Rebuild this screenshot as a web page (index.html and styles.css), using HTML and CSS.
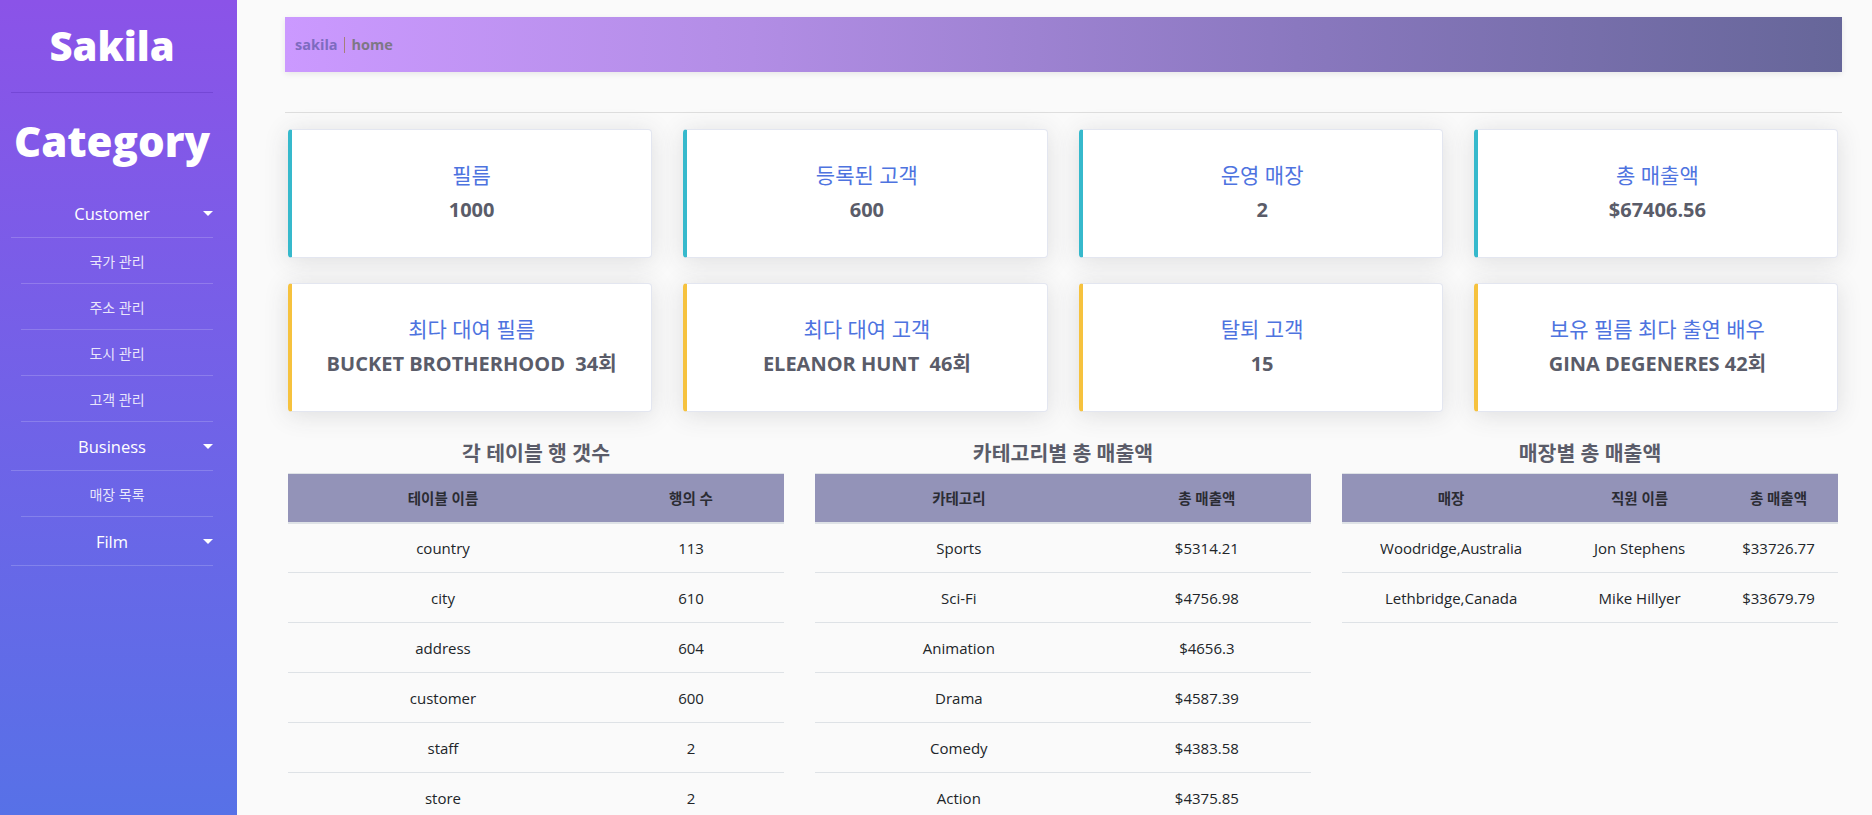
FILE: index.html
```html
<!DOCTYPE html>
<html lang="ko">
<head>
<meta charset="utf-8">
<title>Sakila</title>
<link rel="stylesheet" href="styles.css">
</head>
<body>
<aside class="sidebar">
  <div class="brand">Sakila</div>
  <div class="cat-title">Category</div>
  <nav class="menu">
    <div class="menu-group">Customer<span class="caret"></span></div>
    <a class="menu-sub">국가 관리</a>
    <a class="menu-sub">주소 관리</a>
    <a class="menu-sub">도시 관리</a>
    <a class="menu-sub">고객 관리</a>
    <div class="menu-group">Business<span class="caret"></span></div>
    <a class="menu-sub">매장 목록</a>
    <div class="menu-group">Film<span class="caret"></span></div>
  </nav>
</aside>
<main class="main">
  <div class="topbar">
    <span class="crumb-root">sakila</span><span class="crumb-sep"></span><span class="crumb-cur">home</span>
  </div>
  <hr class="divider">
  <section class="cards">
    <div class="card info"><div class="card-title">필름</div><div class="card-value">1000</div></div>
    <div class="card info"><div class="card-title">등록된 고객</div><div class="card-value">600</div></div>
    <div class="card info"><div class="card-title">운영 매장</div><div class="card-value">2</div></div>
    <div class="card info"><div class="card-title">총 매출액</div><div class="card-value">$67406.56</div></div>
    <div class="card warn"><div class="card-title">최다 대여 필름</div><div class="card-value">BUCKET BROTHERHOOD&nbsp; 34회</div></div>
    <div class="card warn"><div class="card-title">최다 대여 고객</div><div class="card-value">ELEANOR HUNT&nbsp; 46회</div></div>
    <div class="card warn"><div class="card-title">탈퇴 고객</div><div class="card-value">15</div></div>
    <div class="card warn"><div class="card-title">보유 필름 최다 출연 배우</div><div class="card-value">GINA DEGENERES 42회</div></div>
  </section>
  <section class="tables">
    <div class="tblock">
      <h3 class="ttitle">각 테이블 행 갯수</h3>
      <table class="dtable t1">
        <thead><tr><th>테이블 이름</th><th>행의 수</th></tr></thead>
        <tbody>
          <tr><td>country</td><td>113</td></tr>
          <tr><td>city</td><td>610</td></tr>
          <tr><td>address</td><td>604</td></tr>
          <tr><td>customer</td><td>600</td></tr>
          <tr><td>staff</td><td>2</td></tr>
          <tr><td>store</td><td>2</td></tr>
          <tr><td>film</td><td>1000</td></tr>
          <tr><td>actor</td><td>200</td></tr>
          <tr><td>category</td><td>16</td></tr>
        </tbody>
      </table>
    </div>
    <div class="tblock">
      <h3 class="ttitle">카테고리별 총 매출액</h3>
      <table class="dtable t2">
        <thead><tr><th>카테고리</th><th>총 매출액</th></tr></thead>
        <tbody>
          <tr><td>Sports</td><td>$5314.21</td></tr>
          <tr><td>Sci-Fi</td><td>$4756.98</td></tr>
          <tr><td>Animation</td><td>$4656.3</td></tr>
          <tr><td>Drama</td><td>$4587.39</td></tr>
          <tr><td>Comedy</td><td>$4383.58</td></tr>
          <tr><td>Action</td><td>$4375.85</td></tr>
          <tr><td>New</td><td>$4351.62</td></tr>
          <tr><td>Games</td><td>$4281.33</td></tr>
          <tr><td>Foreign</td><td>$4270.67</td></tr>
        </tbody>
      </table>
    </div>
    <div class="tblock">
      <h3 class="ttitle">매장별 총 매출액</h3>
      <table class="dtable t3">
        <thead><tr><th>매장</th><th>직원 이름</th><th>총 매출액</th></tr></thead>
        <tbody>
          <tr><td>Woodridge,Australia</td><td>Jon Stephens</td><td>$33726.77</td></tr>
          <tr><td>Lethbridge,Canada</td><td>Mike Hillyer</td><td>$33679.79</td></tr>
        </tbody>
      </table>
    </div>
  </section>
</main>
</body>
</html>
```
FILE: styles.css
```css
* { box-sizing: border-box; }
html, body { margin: 0; padding: 0; }
body {
  display: flex;
  align-items: flex-start;
  background: #fafafa;
  font-family: "Open Sans", "Noto Sans CJK KR", sans-serif;
  color: #212529;
}

/* Sidebar */
.sidebar {
  position: sticky;
  top: 0;
  flex: 0 0 237px;
  width: 237px;
  height: 100vh;
  background: linear-gradient(180deg, #8b53e8 0%, #5771e7 100%);
  color: #fff;
}
.brand {
  margin: 0 24px 0 11px;
  height: 93px;
  display: flex;
  align-items: center;
  justify-content: center;
  font-size: 40px;
  font-weight: 800;
  border-bottom: 1px solid rgba(60, 20, 150, 0.22);
  padding-bottom: 2px;
}
.cat-title {
  margin: 0 24px 0 11px;
  height: 96px;
  display: flex;
  align-items: center;
  justify-content: center;
  font-size: 42px;
  font-weight: 800;
  padding-bottom: 2px;
}
.menu {
  margin: 0 24px 0 11px;
  display: flex;
  flex-direction: column;
}
.menu-group {
  position: relative;
  height: 49px;
  display: flex;
  align-items: center;
  justify-content: center;
  font-size: 16.5px;
  color: #fff;
  border-bottom: 1px solid rgba(255, 255, 255, 0.18);
}
.caret {
  position: absolute;
  right: 0;
  top: 22px;
  width: 0;
  height: 0;
  border-left: 5px solid transparent;
  border-right: 5px solid transparent;
  border-top: 5px solid #fff;
}
.menu-sub {
  margin-left: 10px;
  height: 46px;
  display: flex;
  align-items: center;
  justify-content: center;
  font-size: 14px;
  color: rgba(255, 255, 255, 0.85);
  border-bottom: 1px solid rgba(255, 255, 255, 0.18);
}

/* Main */
.main {
  flex: 1;
  min-width: 0;
  padding: 17px 30px 40px 48px;
}
.topbar {
  height: 55px;
  display: flex;
  align-items: center;
  padding-left: 10px;
  background: linear-gradient(90deg, #cb99ff 0%, #b28de5 30%, #8a78bf 65%, #666699 100%);
  box-shadow: 0 2px 6px rgba(0, 0, 0, 0.08);
  font-size: 14.5px;
  font-weight: 700;
}
.crumb-root { color: #7e6bc0; }
.crumb-sep {
  display: inline-block;
  width: 1px;
  height: 16px;
  margin: 0 7px 0 6px;
  background: #a58078;
}
.crumb-cur { color: #7d7785; }
.divider {
  margin: 40px 0 0;
  border: 0;
  border-top: 1px solid #dedede;
}

.cards {
  margin: 16px 4px 0 3px;
  display: grid;
  grid-template-columns: repeat(4, 1fr);
  column-gap: 31px;
  row-gap: 25px;
}
.card {
  height: 129px;
  padding-bottom: 2px;
  background: #fff;
  border: 1px solid #e3e6f0;
  border-radius: 4px;
  box-shadow: 0 3px 24px rgba(58, 59, 69, 0.15);
  display: flex;
  flex-direction: column;
  align-items: center;
  justify-content: center;
  gap: 5px;
}
.card.info { border-left: 4px solid #36b9cc; }
.card.warn { border-left: 4px solid #f6c23e; }
.card-title {
  font-size: 21px;
  line-height: 30px;
  color: #4e73df;
}
.card-value {
  font-size: 20px;
  line-height: 30px;
  font-weight: 700;
  color: #5a5c69;
}

.tables {
  margin: 26px 4px 0 3px;
  display: grid;
  grid-template-columns: repeat(3, 1fr);
  column-gap: 31px;
  align-items: start;
}
.ttitle {
  margin: 0 0 5px;
  text-align: center;
  font-size: 20.5px;
  line-height: 30px;
  font-weight: 700;
  color: #5a5c69;
}
.dtable {
  width: 100%;
  border-collapse: collapse;
  font-size: 15px;
}
.dtable th {
  height: 49px;
  background: #9393b8;
  border-top: 1px solid #dee2e6;
  border-bottom: 2px solid #dee2e6;
  font-size: 14.5px;
  font-weight: 600;
  color: #2b2c33;
  text-align: center;
  padding: 0;
}
.dtable td {
  height: 50px;
  text-align: center;
  border-bottom: 1px solid #dee2e6;
  padding: 0;
  color: #212529;
}
.t1 th:first-child { width: 62.5%; }
.t2 th:first-child { width: 58%; }
.t3 th:nth-child(1) { width: 44%; }
.t3 th:nth-child(2) { width: 32%; }
```
